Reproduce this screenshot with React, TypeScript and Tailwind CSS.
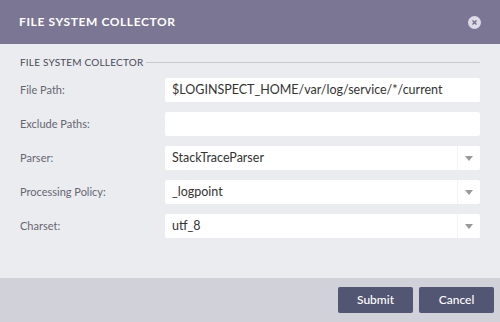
import React from "react";

const font = { fontFamily: "Lato, 'Open Sans', sans-serif" };

function Arrow() {
  return (
    <svg width="8" height="5" viewBox="0 0 8 5">
      <path d="M0 0 L8 0 L4 5 Z" fill="#9a9a9a" />
    </svg>
  );
}

function Row({ label, value, select }: { label: string; value: string; select?: boolean }) {
  return (
    <div className="flex items-center h-[24px]">
      <div className="w-[145px] text-[11px] text-[#666670]">{label}</div>
      <div className="flex-1 h-[24px] bg-white rounded-[2px] flex items-center">
        <div className="flex-1 pl-[7px] text-[12.5px] text-[#333] leading-none">{value}</div>
        {select && (
          <div className="w-[23px] h-full border-l border-[#f2f2f2] flex items-center justify-center">
            <Arrow />
          </div>
        )}
      </div>
    </div>
  );
}

export default function App() {
  return (
    <div className="w-[500px] h-[322px] flex flex-col bg-[#ebecf0]" style={font}>
      <div className="h-[44px] bg-[#7a7694] flex items-center justify-between pl-[19px] pr-[19px]">
        <div className="text-white font-bold text-[12px] tracking-[0.6px]">FILE SYSTEM COLLECTOR</div>
        <div className="w-[13px] h-[13px] rounded-full bg-[#dedbe6] flex items-center justify-center">
          <svg width="5" height="5" viewBox="0 0 5 5">
            <path d="M0.5 0.5 L4.5 4.5 M4.5 0.5 L0.5 4.5" stroke="#6e6a88" strokeWidth="1.3" />
          </svg>
        </div>
      </div>
      <div className="flex-1 pl-[20px] pr-[20px] pt-[13px]">
        <div className="flex items-center h-[10px]">
          <div className="text-[10px] text-[#4a4a55] tracking-[0.2px] whitespace-nowrap">FILE SYSTEM COLLECTOR</div>
          <div className="flex-1 ml-[3px] h-px bg-[#c8c8cd]" />
        </div>
        <div className="mt-[11px] flex flex-col gap-[10px]">
          <Row label="File Path:" value="$LOGINSPECT_HOME/var/log/service/*/current" />
          <Row label="Exclude Paths:" value="" />
          <Row label="Parser:" value="StackTraceParser" select />
          <Row label="Processing Policy:" value="_logpoint" select />
          <Row label="Charset:" value="utf_8" select />
        </div>
      </div>
      <div className="h-[44px] bg-[#d1d1da] flex items-center justify-end gap-[6px] pr-[6px]">
        <button className="w-[75px] h-[26px] rounded-[2px] bg-[#525672] text-white text-[12px] font-medium">Submit</button>
        <button className="w-[75px] h-[26px] rounded-[2px] bg-[#525672] text-white text-[12px] font-medium">Cancel</button>
      </div>
    </div>
  );
}
